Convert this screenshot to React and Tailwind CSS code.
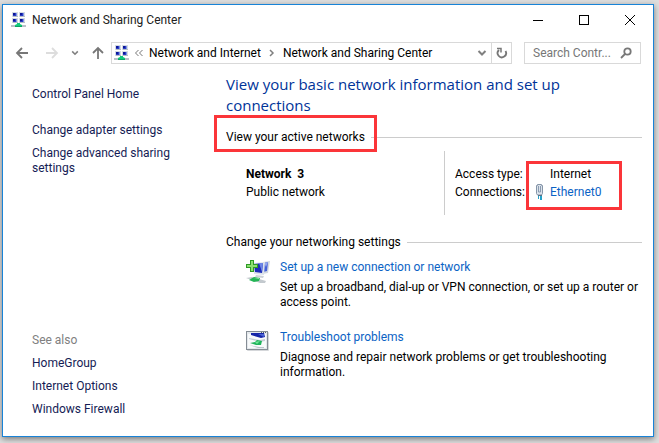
const NetworkCenterIcon = ({ className }) => (
  <svg className={className} width="16" height="16" viewBox="0 0 16 16" aria-hidden="true">
    {[[1, 0], [8, 0], [1, 6], [8, 6]].map(([x, y]) => (
      <g key={`${x}-${y}`}>
        <rect x={x} y={y} width="6" height="5" fill="#d3dae2" />
        <rect x={x + 1} y={y + 1} width="4" height="3" fill="#7f93e4" />
        <rect x={x + 1} y={y + 1} width="3" height="3" fill="#2a3cc4" />
        <rect x={x + 1} y={y + 1} width="2" height="2" fill="#0c1696" />
        <rect x={x + 1} y={y + 4} width="5" height="1" fill="#b4bcc4" />
      </g>
    ))}
    <rect x="0" y="13" width="15" height="2" fill="#b9c1c8" />
    <path d="M6 11h3v1l2 1v2H4v-2l2-1z" fill="#12cb7c" />
    <path d="M4 14h7v1H4z" fill="#0ca463" />
  </svg>
);

const NewConnectionIcon = () => (
  <svg width="24" height="24" viewBox="0 0 24 24" aria-hidden="true">
    <path d="M17 2l7-1-2 12-6 1z" fill="#d0d7e0" />
    <path d="M18 3l4-1-1 9-4 1z" fill="#4561d8" />
    <path d="M18 3l4-1-2 5z" fill="#93a7ee" />
    <path d="M7 3l12-1-1 13-10-1z" fill="#dbe2ea" />
    <path d="M8 4l9-1-1 10-7-1z" fill="#1c2cba" />
    <path d="M13 3h4l-1 9z" fill="#6d86e6" />
    <path d="M10 15l8 1-1 2-8-1z" fill="#ccd2d8" />
    <path d="M0 18l6-1 14 4-1 2-5 0z" fill="#c3c9ce" />
    <path d="M3 20l5-3 6 1-1 3-5 1z" fill="#23b455" />
    <path d="M8 18h5v1z" fill="#8be8a2" />
    <path d="M4 0h4v4h4v4H8v4H4V8H0V4h4z" fill="#2f9a26" />
    <path d="M5 1h2v4h4v2H7v4H5V7H1V5h4z" fill="#8ce070" />
  </svg>
);

const TroubleshootIcon = () => (
  <svg width="24" height="22" viewBox="0 0 24 22" aria-hidden="true">
    <rect x="1" y="2" width="22" height="19" rx="1" fill="#d5d7da" />
    <rect x="0.5" y="1.5" width="21" height="18" fill="#e4e8ec" stroke="#858d95" />
    <rect x="2" y="4" width="18" height="14" fill="#f8fafb" />
    <path d="M15 2h1v1h-1zM17 2h1v1h-1zM19 2h1v1h-1z" fill="#59616a" />
    <path d="M5 3h13l1 4-4 1-10-3z" fill="#1625a8" />
    <path d="M12 4l6 0 0 3z" fill="#4962d4" />
    <path d="M3 8l11 2 5-1v2l-5 1-11-3z" fill="#c5cdd5" />
    <path d="M4 13l5-1 2-2 5 1-1 4-5 0z" fill="#20b45c" />
    <path d="M9 12l5-1-3 3z" fill="#6fe496" />
    <path d="M3 15l10 2h5v1l-6 0z" fill="#bcc4cc" />
  </svg>
);

const EthernetIcon = () => (
  <svg width="10" height="16" viewBox="0 0 10 16" aria-hidden="true">
    <path d="M2.500 .5h4v1h1v8l-1 1.500h-4l-1-1.500v-8h1z" fill="#dce3eb" stroke="#8595a8" />
    <path d="M3.500 2v6h2V2" fill="none" stroke="#8a9bb0" />
    <path d="M3 11h4v1H3z" fill="#5c7286" />
    <path d="M3 12h1v3H3zM5 12h2v4H5z" fill="#25a1c9" />
  </svg>
);

const ArrowIcon = ({ className }) => (
  <svg className={className} width="14" height="14" viewBox="0 0 14 14" fill="none" stroke="currentColor" strokeWidth="1.8" aria-hidden="true">
    <path d="M13 7H2M7 2L2 7l5 5" />
  </svg>
);

const ChevronDown = ({ size }) => (
  <svg width={size} height={size} viewBox="0 0 10 10" fill="none" stroke="#808080" strokeWidth="2" aria-hidden="true">
    <path d="M1.500 3L5 6.500 8.500 3" />
  </svg>
);

const SideLink = ({ children, className = "" }) => (
  <a href="#" className={`block text-[#151c55] hover:underline ${className}`}>{children}</a>
);

const SectionTitle = ({ children, highlighted }) => (
  <div className="flex items-center gap-1.5">
    <h2 className="relative">
      {children}
      {highlighted && <span className="pointer-events-none absolute -inset-x-3 -top-[15px] -bottom-[7px] border-3 border-[#fb3539]" />}
    </h2>
    <span className="h-px flex-1 bg-[#cccccc]" />
  </div>
);

const Task = ({ icon, title, children }) => (
  <li className="flex gap-2.5">
    <span className="w-6 shrink-0">{icon}</span>
    <div>
      <a href="#" className="block text-[#0b63c5] hover:underline">{title}</a>
      <p className="mt-[5px]">{children}</p>
    </div>
  </li>
);

export default function App() {
  return (
    <div className="flex min-h-screen bg-[#dedede] pt-1 pr-[5px] pb-1.5 pl-0.5 font-['Roboto','Open_Sans',sans-serif] text-[12px] leading-[15px] text-black">
      <div className="flex flex-1 flex-col border border-[#1883d7] bg-white shadow-[0_2px_6px_rgba(0,0,0,0.45)]">
        <header className="flex h-[30px] items-center pl-2">
          <NetworkCenterIcon />
          <h1 className="ml-[5px] flex-1 text-[#222222]">Network and Sharing Center</h1>
          <button aria-label="Minimize" className="flex h-full w-[46px] items-center justify-center">
            <span className="h-px w-2.5 bg-black" />
          </button>
          <button aria-label="Maximize" className="flex h-full w-[46px] items-center justify-center">
            <span className="size-2.5 border border-black" />
          </button>
          <button aria-label="Close" className="flex h-full w-[46px] items-center justify-center">
            <svg width="10" height="10" viewBox="0 0 10 10" stroke="#000" aria-hidden="true">
              <path d="M0 0L10 10M10 0L0 10" />
            </svg>
          </button>
        </header>

        <nav className="mt-[7px] flex h-[22px] items-center pr-3 pl-3">
          <button aria-label="Back"><ArrowIcon className="text-[#777777]" /></button>
          <button aria-label="Forward" className="ml-4"><ArrowIcon className="rotate-180 text-[#dddddd]" /></button>
          <button aria-label="Recent locations" className="ml-3"><ChevronDown size={8} /></button>
          <button aria-label="Up" className="ml-3"><ArrowIcon className="rotate-90 text-[#777777]" /></button>
          <div className="ml-1.5 flex h-full flex-1 items-center border border-[#d9d9d9] pl-0.5">
            <NetworkCenterIcon />
            <svg className="ml-1" width="10" height="8" viewBox="0 0 10 8" fill="none" stroke="#777" aria-hidden="true">
              <path d="M4.500 1L1.500 4l3 3M8.500 1L5.500 4l3 3" />
            </svg>
            <a href="#" className="ml-[5px] whitespace-nowrap">Network and Internet</a>
            <svg className="mx-2" width="6" height="8" viewBox="0 0 6 8" fill="none" stroke="#808080" strokeWidth="1.500" aria-hidden="true">
              <path d="M1 1l3 3-3 3" />
            </svg>
            <a href="#" className="flex-1 whitespace-nowrap">Network and Sharing Center</a>
            <button aria-label="Previous locations" className="px-1"><ChevronDown size={10} /></button>
            <button aria-label="Refresh" className="flex h-full w-5 items-center justify-center border-l border-[#d9d9d9]">
              <svg width="12" height="12" viewBox="0 0 12 12" fill="none" stroke="#777" strokeWidth="1.800" aria-hidden="true">
                <path d="M9.500 4a4.200 4.200 0 1 1-6.500-1" />
                <path d="M1 1.500h4v4" strokeWidth="1.500" />
              </svg>
            </button>
          </div>
          <label className="ml-3 flex h-full w-[117px] items-center border border-[#d9d9d9] px-2">
            <input aria-label="Search Control Panel" placeholder="Search Contr..." className="w-0 flex-1 outline-none placeholder:text-[#777777]" />
            <svg width="12" height="12" viewBox="0 0 12 12" fill="none" stroke="#777" strokeWidth="1.800" aria-hidden="true">
              <circle cx="7.500" cy="4.500" r="3.200" />
              <path d="M5 7L1 11" />
            </svg>
          </label>
        </nav>

        <div className="flex flex-1 pr-[11px]">
          <aside className="flex w-[223px] shrink-0 flex-col pt-[23px] pr-12 pb-[19px] pl-[29px]">
            <SideLink>Control Panel Home</SideLink>
            <SideLink className="mt-[21px]">Change adapter settings</SideLink>
            <SideLink className="mt-2">Change advanced sharing settings</SideLink>
            <div className="mt-auto flex flex-col gap-2">
              <h2 className="text-[#808080]">See also</h2>
              <SideLink>HomeGroup</SideLink>
              <SideLink>Internet Options</SideLink>
              <SideLink>Windows Firewall</SideLink>
            </div>
          </aside>

          <main className="flex-1 pt-2.5">
            <h2 className="font-['Open_Sans',sans-serif] text-[15px] leading-[21px] text-[#003399]">View your basic network information and set up connections</h2>
            <div className="mt-3.5">
              <SectionTitle highlighted>View your active networks</SectionTitle>
            </div>
            <div className="mt-1.5 flex h-16 pl-5">
              <div className="flex-1 pt-[14px] leading-[18px]">
                <p className="font-bold">Network&nbsp; 3</p>
                <p>Public network</p>
              </div>
              <dl className="relative grid w-[198px] grid-cols-[80px_1fr] content-start border-l border-[#cccccc] pt-[14px] pl-2.5 leading-[18px] whitespace-nowrap">
                <dt>Access type:</dt>
                <dd className="pl-[15px]">Internet</dd>
                <dt>Connections:</dt>
                <dd className="flex items-center gap-[5px]">
                  <EthernetIcon />
                  <a href="#" className="text-[#0b63c5] hover:underline">Ethernet0</a>
                </dd>
                <span className="pointer-events-none absolute top-2.5 right-5 h-[49px] w-24 border-3 border-[#fb3539]" />
              </dl>
            </div>
            <div className="mt-5">
              <SectionTitle>Change your networking settings</SectionTitle>
            </div>
            <ul className="mt-2.5 flex flex-col gap-5 pl-5">
              <Task icon={<NewConnectionIcon />} title="Set up a new connection or network">
                Set up a broadband, dial-up or VPN connection, or set up a router or access point.
              </Task>
              <Task icon={<TroubleshootIcon />} title="Troubleshoot problems">
                Diagnose and repair network problems or get troubleshooting information.
              </Task>
            </ul>
          </main>
        </div>
      </div>
    </div>
  );
}
